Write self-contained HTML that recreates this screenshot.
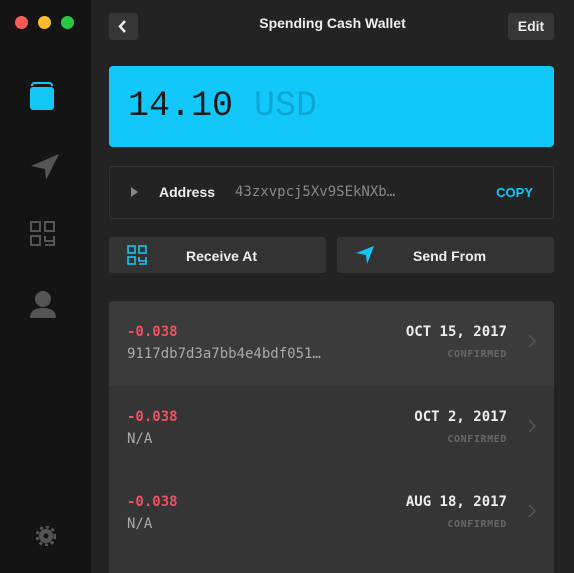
<!DOCTYPE html>
<html><head><meta charset="utf-8"><style>
*{margin:0;padding:0;box-sizing:border-box}
body{width:574px;height:573px;overflow:hidden;background:#232323;font-family:"Liberation Sans",sans-serif;position:relative}
.side{position:absolute;left:0;top:0;width:91px;height:573px;background:#141414}
.dot{position:absolute;top:16px;width:13px;height:13px;border-radius:50%}
.abs{position:absolute}
.btn{position:absolute;background:#363636;border-radius:3px;color:#eee}
.mono{font-family:"DejaVu Sans Mono","Liberation Mono",monospace}
.row{position:absolute;left:109px;width:445px;height:85px}
.amt{position:absolute;left:18px;top:23px;color:#f0505f;font-size:14px;font-weight:bold}
.sub{position:absolute;left:18px;top:45px;color:#aaa;font-size:14px}
.date{position:absolute;right:47px;top:23px;color:#eee;font-size:14px;font-weight:bold}
.conf{position:absolute;right:47px;top:48px;color:#666;font-size:10px;font-weight:bold;letter-spacing:.6px}
.chev{position:absolute;right:18px;top:33px}
</style></head><body>
<div class="side">
<div class="dot" style="left:15px;background:#fc5b57"></div>
<div class="dot" style="left:38px;background:#fdbb2e"></div>
<div class="dot" style="left:61px;background:#28c840"></div>
<svg class="abs" style="left:29px;top:82px" width="26" height="30"><path d="M3 4 Q3 1 6 1 H20 Q23 1 23 4" fill="none" stroke="#12c6f6" stroke-width="2"/><rect x="1" y="5" width="24" height="23" rx="3" fill="#12c6f6"/></svg>
<svg class="abs" style="left:29px;top:152px" width="32" height="30"><path d="M2 14 L30 2 L17 28 L16 17 Z" fill="#555"/></svg>
<svg class="abs" style="left:29px;top:220px" width="28" height="30" fill="none" stroke="#555" stroke-width="2"><rect x="2" y="2" width="9" height="9"/><rect x="16" y="2" width="9" height="9"/><rect x="2" y="16" width="9" height="9"/><path d="M16 16v5h9M25 16v9h-9"/></svg>
<svg class="abs" style="left:30px;top:290px" width="30" height="30"><circle cx="13" cy="9" r="8" fill="#555"/><path d="M0 28 Q0 18 13 18 Q26 18 26 28 Z" fill="#555"/></svg>
<svg class="abs" style="left:36px;top:526px" width="20" height="20"><circle cx="10" cy="10" r="7" fill="#555"/><circle cx="10" cy="10" r="9" fill="none" stroke="#555" stroke-width="3" stroke-dasharray="3 3"/><circle cx="10" cy="10" r="2.5" fill="#141414"/></svg>
</div>
<div class="btn" style="left:109px;top:13px;width:29px;height:27px"><svg width="29" height="27"><path d="M16 8 L11 13.5 L16 19" fill="none" stroke="#eee" stroke-width="2.5"/></svg></div>
<div class="abs" style="left:91px;width:483px;top:15px;text-align:center;color:#eee;font-weight:bold;font-size:14px">Spending Cash Wallet</div>
<div class="btn" style="left:508px;top:13px;width:46px;height:27px;text-align:center;line-height:27px;font-size:14px;font-weight:bold">Edit</div>
<div class="abs" style="left:109px;top:66px;width:445px;height:81px;background:#12c8fa;border-radius:4px"><span class="abs" style="left:19px;top:20px;font-size:35px;color:#1a1a1a;font-family:'Liberation Mono',monospace">14.10 <span style="color:#0fa6d4">USD</span></span></div>
<div class="abs" style="left:109px;top:166px;width:445px;height:53px;border:1px solid #333;border-radius:4px">
<svg class="abs" style="left:20px;top:19px" width="10" height="12"><path d="M1 1 L8 6 L1 11 Z" fill="#888"/></svg>
<span class="abs" style="left:49px;top:17px;color:#eee;font-weight:bold;font-size:14px">Address</span>
<span class="abs mono" style="left:125px;top:17px;color:#888;font-size:14px">43zxvpcj5Xv9SEkNXb…</span>
<span class="abs" style="right:20px;top:18px;color:#12c6f6;font-weight:bold;font-size:13px">COPY</span>
</div>
<div class="btn" style="left:109px;top:237px;width:217px;height:36px;background:#333">
<svg class="abs" style="left:18px;top:8px" width="20" height="20" fill="none" stroke="#12c6f6" stroke-width="1.6"><rect x="1" y="1" width="7" height="7"/><rect x="12" y="1" width="7" height="7"/><rect x="1" y="12" width="7" height="7"/><path d="M12 12v4h7M19 12v7h-7"/></svg>
<span class="abs" style="left:77px;top:11px;font-weight:bold;font-size:14px">Receive At</span></div>
<div class="btn" style="left:337px;top:237px;width:217px;height:36px;background:#333">
<svg class="abs" style="left:18px;top:8px" width="20" height="20"><path d="M1 8 L19 1 L12 19 L11 10 Z" fill="#12c6f6"/></svg>
<span class="abs" style="left:76px;top:11px;font-weight:bold;font-size:14px">Send From</span></div>
<div class="row" style="top:301px;background:#3b3b3b;border-radius:4px 4px 0 0"><div class="amt mono">-0.038</div><div class="sub mono">9117db7d3a7bb4e4bdf051…</div><div class="date mono">OCT 15, 2017</div><div class="conf mono">CONFIRMED</div><svg class="chev" width="8" height="14"><path d="M1 1 L7 7 L1 13" fill="none" stroke="#555" stroke-width="1.5"/></svg></div>
<div class="row" style="top:386px;background:#353535"><div class="amt mono">-0.038</div><div class="sub mono">N/A</div><div class="date mono">OCT 2, 2017</div><div class="conf mono">CONFIRMED</div><svg class="chev" width="8" height="14"><path d="M1 1 L7 7 L1 13" fill="none" stroke="#555" stroke-width="1.5"/></svg></div>
<div class="row" style="top:471px;height:102px;background:#353535"><div class="amt mono">-0.038</div><div class="sub mono">N/A</div><div class="date mono">AUG 18, 2017</div><div class="conf mono">CONFIRMED</div><svg class="chev" width="8" height="14"><path d="M1 1 L7 7 L1 13" fill="none" stroke="#555" stroke-width="1.5"/></svg></div>
</body></html>
